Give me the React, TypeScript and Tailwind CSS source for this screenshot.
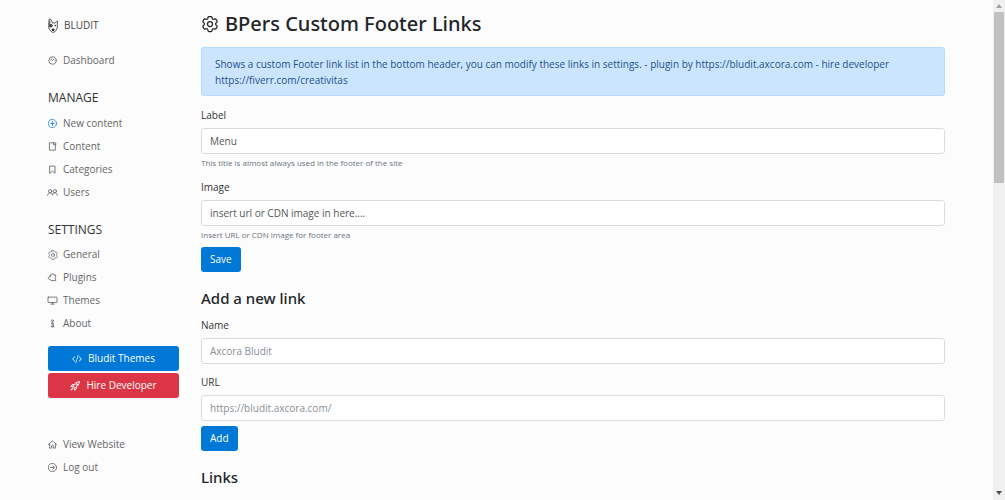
import type { ReactNode } from "react";
import clsx from "clsx";
import { BsCodeSlash } from "react-icons/bs";
import { HiOutlineCog6Tooth } from "react-icons/hi2";

type IconName =
  | "dashboard"
  | "plus"
  | "file"
  | "bookmark"
  | "users"
  | "gear"
  | "plugin"
  | "desktop"
  | "info"
  | "home"
  | "logout";

const strokes = {
  fill: "none",
  stroke: "currentColor",
  strokeWidth: 1.5,
  strokeLinejoin: "round" as const,
  strokeLinecap: "round" as const
};

const paths: Record<Exclude<IconName, "gear">, ReactNode> = {
  dashboard: (
    <>
      <circle cx="8" cy="8" r="6.6" />
      <path d="M7.4 8.8 10.8 5.4M4.6 7.4A3.4 3.4 0 0 1 7 4.8" />
    </>
  ),
  plus: (
    <>
      <circle cx="8" cy="8" r="7.2" />
      <path d="M8 5v6M5 8h6" strokeWidth="1.9" />
    </>
  ),
  file: <path d="M10.5 1.5h-8v13H13V4.8M10.5 1.5h3.3v3.3h-3.3z" />,
  bookmark: <path d="M3.5 2h9v12.5L8 10.8l-4.5 3.7z" />,
  users: (
    <>
      <circle cx="3.8" cy="5.6" r="2.9" />
      <circle cx="12.2" cy="5.6" r="2.9" />
      <path d="M-.6 13c.2-2.8 1.9-4.4 4.4-4.4S7.700 10.200 8 13c.3-2.800 1.700-4.400 4.200-4.400s4.200 1.600 4.400 4.400" />
    </>
  ),
  plugin: <path d="M4 3.5h2.6a2 2 0 0 1 4 0h3v3.300a1.800 1.800 0 0 0 0 3.500v3.200H5.400L4 11.200a2.500 2.500 0 1 1 0-4.600z" />,
  desktop: (
    <>
      <rect x="0" y="2" width="16" height="9.6" rx=".6" />
      <path d="M8 11.8v2.4M5 14.400h6" />
    </>
  ),
  info: (
    <>
      <circle cx="8" cy="3" r="1.6" />
      <path d="M5.800 7h3.600v6.600M5.400 13.800h5.400M7.400 7v6.600" />
    </>
  ),
  home: <path d="M.5 8.200 8 1.500l7.500 6.700M2.800 6.800v7.600h3.700v-3.800a1.500 1.500 0 0 1 3 0v3.800h3.700V6.800" />,
  logout: (
    <>
      <circle cx="8" cy="8" r="7.200" />
      <path d="M4.500 8h6.600M8.600 5.300 11.300 8l-2.700 2.700" />
    </>
  )
};

function Icon({ name }: { name: IconName }) {
  if (name === "gear") return <HiOutlineCog6Tooth className="size-3 shrink-0" />;
  return (
    <svg viewBox="0 0 16 16" className="size-[9px] shrink-0 overflow-visible" aria-hidden="true" {...strokes}>
      {paths[name]}
    </svg>
  );
}

function BluditLogo() {
  return (
    <svg viewBox="0 0 20 30" className="h-[15px] w-[10px] shrink-0" aria-hidden="true">
      <path
        d="M2.500 1.500 1.500 9v11l3 5 4 3.500h3.500l4-3.500 2.500-5L19 6l-5 4H9L6.500 4z"
        fill="#fafafa"
        stroke="#444"
        strokeWidth="1.7"
        strokeLinejoin="round"
      />
      <path d="M2.500 3 5 9l-1 3-2 1z" fill="#555" />
      <path d="M2 13l5-1 3 3-2 3-5 1z" fill="#333" />
      <circle cx="6.500" cy="15.200" r=".9" fill="#fff" />
      <circle cx="14.500" cy="15.200" r="1.500" fill="#222" />
      <path d="M7 21.500h6.500L12 26H8.500z" fill="#222" />
    </svg>
  );
}

function RocketIcon() {
  return (
    <svg viewBox="0 0 16 16" className="size-[10px] shrink-0" aria-hidden="true" {...strokes}>
      <path d="M14.800 1.200c-4.400 0-7.500 2.400-9.600 6.600l3 3c4.200-2.100 6.600-5.200 6.600-9.600z" />
      <path d="M6.300 5.800H3.400L1.200 8.800l3.700-.4M10.200 9.700v2.900l-3 2.200.4-3.700M4.200 10.600 1.300 14.700l4.100-2.900" />
      <circle cx="10.600" cy="5.400" r="1.300" />
    </svg>
  );
}

type Item = { label: string; icon: IconName };

const manage: Item[] = [
  { label: "New content", icon: "plus" },
  { label: "Content", icon: "file" },
  { label: "Categories", icon: "bookmark" },
  { label: "Users", icon: "users" }
];

const settings: Item[] = [
  { label: "General", icon: "gear" },
  { label: "Plugins", icon: "plugin" },
  { label: "Themes", icon: "desktop" },
  { label: "About", icon: "info" }
];

const footer: Item[] = [
  { label: "View Website", icon: "home" },
  { label: "Log out", icon: "logout" }
];

function NavList({ items }: { items: Item[] }) {
  return (
    <ul>
      {items.map((item) => (
        <li key={item.label}>
          <a href="#" className="flex h-[23px] items-center gap-1.5 text-[#666]">
            <span className={clsx("flex w-[9px] justify-center", item.icon === "plus" && "text-[#2b87e8]")}>
              <Icon name={item.icon} />
            </span>
            {item.label}
          </a>
        </li>
      ))}
    </ul>
  );
}

function Sidebar() {
  return (
    <nav className="w-[131px] shrink-0 pt-[13px]">
      <a href="#" className="flex h-6 items-center gap-1.5 text-[10px] text-[#444]">
        <BluditLogo />
        BLUDIT
      </a>
      <div className="mt-3">
        <NavList items={[{ label: "Dashboard", icon: "dashboard" }]} />
      </div>

      <h4 className="mt-3.5 mb-0.5 text-xs leading-6 text-[#333]">MANAGE</h4>
      <NavList items={manage} />

      <h4 className="mt-3.5 mb-px text-xs leading-6 text-[#333]">SETTINGS</h4>
      <NavList items={settings} />

      <div className="mt-[11px] flex flex-col gap-0.5 text-white">
        <a href="#" className="flex h-[25px] items-center justify-center gap-1.5 rounded-[3px] bg-[#0078d7]">
          <BsCodeSlash className="size-[10px]" />
          Bludit Themes
        </a>
        <a href="#" className="flex h-[25px] items-center justify-center gap-1.5 rounded-[3px] bg-[#dc3545]">
          <RocketIcon />
          Hire Developer
        </a>
      </div>

      <div className="mt-[35px]">
        <NavList items={footer} />
      </div>
    </nav>
  );
}

type FieldProps = {
  id: string;
  label: string;
  value?: string;
  placeholder?: string;
  help?: string;
};

function Field({ id, label, value, placeholder, help }: FieldProps) {
  return (
    <div>
      <label htmlFor={id} className="mb-[5px] block leading-4 text-[#333]">
        {label}
      </label>
      <input
        id={id}
        type="text"
        defaultValue={value}
        placeholder={placeholder}
        className="block h-[26px] w-full rounded-[3px] border border-[#d9dde1] bg-white px-2 text-[#555] placeholder:text-[#868e96]"
      />
      {help && <small className="mt-0.5 block text-[8px] leading-[14px] text-[#6c757d]">{help}</small>}
    </div>
  );
}

function SubmitButton({ children }: { children: ReactNode }) {
  return (
    <button type="submit" className="mt-[5px] block h-[25px] rounded-[3px] bg-[#0078d7] px-[9px] text-white">
      {children}
    </button>
  );
}

function Scrollbar() {
  return (
    <div className="sticky top-0 flex h-screen w-3 shrink-0 flex-col items-center bg-[#f0f0f0]" aria-hidden="true">
      <div className="flex h-3 items-center">
        <svg viewBox="0 0 6 4" className="h-1 w-1.5">
          <path d="M0 4 3 0l3 4z" fill="#a0a0a0" />
        </svg>
      </div>
      <div className="h-[171px] w-[10px] bg-[#c1c1c1]" />
      <div className="mt-auto flex h-3.5 items-center">
        <svg viewBox="0 0 6 4" className="h-1 w-1.5">
          <path d="M0 0h6L3 4z" fill="#505050" />
        </svg>
      </div>
    </div>
  );
}

export default function App() {
  return (
    <div className="flex h-screen overflow-hidden bg-[#fcfcfc] font-['Open_Sans','Noto_Sans',sans-serif] text-[10px]">
      <div className="flex min-w-0 flex-1 gap-[22px] px-12">
        <Sidebar />
        <main className="min-w-0 flex-1 pt-2">
          <h2 className="flex h-8 items-center gap-[5px] font-['Noto_Sans',sans-serif] text-xl font-medium text-[#212529]">
            <HiOutlineCog6Tooth className="-ml-px size-5" />
            BPers Custom Footer Links
          </h2>
          <div className="mt-[7px] rounded-[3px] border border-[#b8daff] bg-[#cce5ff] px-[13px] pt-2 pb-[7px] leading-4 text-[#1f4f8a]">
            Shows a custom Footer link list in the bottom header, you can modify these links in settings. - plugin by
            https://bludit.axcora.com - hire developer https://fiverr.com/creativitas
          </div>

          <form className="mt-[11px]" onSubmit={(e) => e.preventDefault()}>
            <div className="flex flex-col gap-[9px]">
              <Field id="label" label="Label" value="Menu" help="This title is almost always used in the footer of the site" />
              <Field
                id="image"
                label="Image"
                value="insert url or CDN image in here...."
                help="Insert URL or CDN image for footer area"
              />
            </div>
            <SubmitButton>Save</SubmitButton>
          </form>

          <form className="mt-3.5" onSubmit={(e) => e.preventDefault()}>
            <h4 className="mb-[7px] font-['Noto_Sans',sans-serif] text-[15px] leading-6 font-medium text-[#212529]">
              Add a new link
            </h4>
            <div className="flex flex-col gap-2.5">
              <Field id="name" label="Name" placeholder="Axcora Bludit" />
              <Field id="url" label="URL" placeholder="https://bludit.axcora.com/" />
            </div>
            <SubmitButton>Add</SubmitButton>
          </form>

          <h4 className="mt-3.5 font-['Noto_Sans',sans-serif] text-[15px] leading-6 font-medium text-[#212529]">Links</h4>
        </main>
      </div>
      <Scrollbar />
    </div>
  );
}
